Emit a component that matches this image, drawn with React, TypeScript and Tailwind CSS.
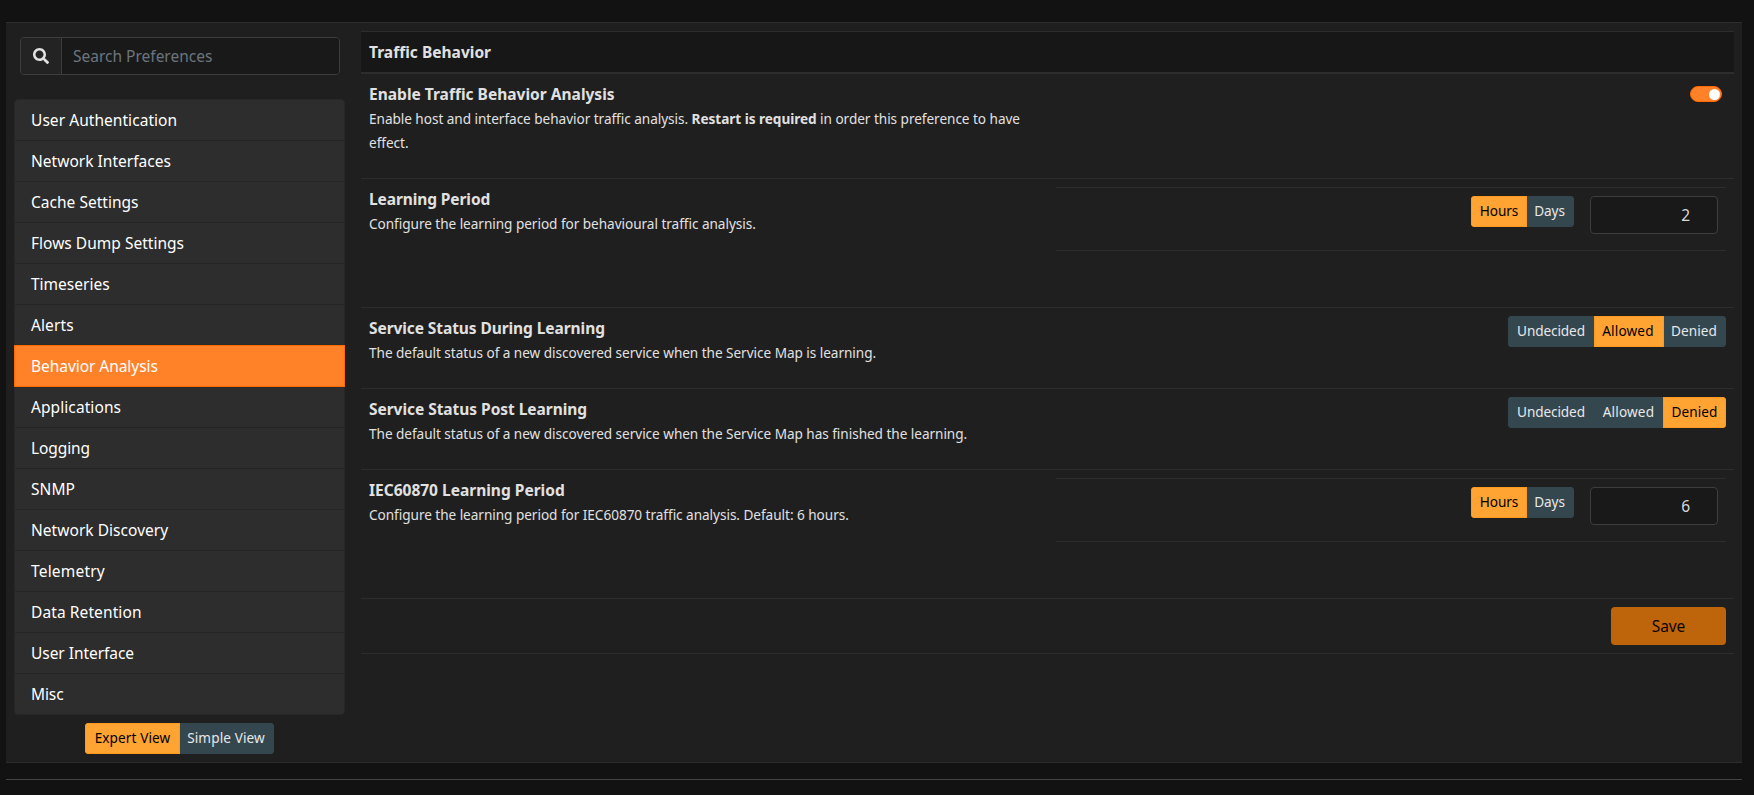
import type { ReactNode } from "react";
import { FaSearch } from "react-icons/fa";

type Choice = { label: string; width: string; spacing?: string };

const sections = [
  { label: "User Authentication", spacing: "tracking-[0.05px]" },
  { label: "Network Interfaces", spacing: "tracking-[0.02px]" },
  { label: "Cache Settings", spacing: "tracking-[0.02px]" },
  { label: "Flows Dump Settings", spacing: "tracking-[0.02px]" },
  { label: "Timeseries", spacing: "tracking-[0px]" },
  { label: "Alerts", spacing: "tracking-[0.1px]" },
  { label: "Behavior Analysis", spacing: "tracking-[-0.05px]" },
  { label: "Applications", spacing: "tracking-[0.08px]" },
  { label: "Logging", spacing: "tracking-[-0.1px]" },
  { label: "SNMP", spacing: "tracking-[0.05px]" },
  { label: "Network Discovery", spacing: "tracking-[0.04px]" },
  { label: "Telemetry", spacing: "tracking-[0.2px]" },
  { label: "Data Retention", spacing: "tracking-[0.1px]" },
  { label: "User Interface", spacing: "tracking-[-0.05px]" },
  { label: "Misc", spacing: "tracking-[-0.1px]" },
];

function ButtonGroup({ choices, active }: { choices: Choice[]; active: string }) {
  return (
    <div className="flex h-[31px] overflow-hidden rounded text-[13.6px]">
      {choices.map((c) => (
        <button
          key={c.label}
          className={`${c.width} whitespace-nowrap border pb-1 pt-px text-center leading-[21px] ${c.spacing ?? "tracking-[-0.1px]"} ${
            c.label === active
              ? "border-[#ff9a1f] bg-[#ffa333] text-black"
              : "border-[#34474f] bg-[#34474f] text-[#e8e8e8]"
          }`}
        >
          {c.label}
        </button>
      ))}
    </div>
  );
}

function Info({
  title,
  titleSpacing = "tracking-[-0.03px]",
  children,
}: {
  title: string;
  titleSpacing?: string;
  children: ReactNode;
}) {
  return (
    <div className="w-[695px] pl-2 pt-2">
      <div className={`text-[15.5px] font-bold leading-6 ${titleSpacing}`}>{title}</div>
      <p className="w-[675px] pt-px text-[13.6px] leading-6 tracking-[-0.04px]">{children}</p>
    </div>
  );
}

const periodChoices: Choice[] = [
  { label: "Hours", width: "w-[56px]" },
  { label: "Days", width: "w-[47px] pr-0.5" },
];

function PeriodControls({ value }: { value: number }) {
  return (
    <div className="mr-2 mt-2 flex h-16 flex-1 items-start justify-end border-y border-[#2d2d2d] pr-2 pt-2">
      <ButtonGroup choices={periodChoices} active="Hours" />
      <div className="ml-4 flex h-[38px] w-32 items-center justify-end rounded border border-[#3d3d3d] bg-[#191919] pr-[27px] pt-0.5 text-[15.5px] text-[#d8d8d8]">
        {value}
      </div>
    </div>
  );
}

export default function App() {
  return (
    <div className="h-[795px] w-[1754px] bg-[#121212] pl-1.5 pt-[22px] font-['Noto_Sans',sans-serif] text-[#e1e1e1]">
      <main className="flex h-[741px] w-[1736px] border-y border-[#2d2d2d] bg-[#1f1f1f]">
        <aside className="ml-2 w-[331px] shrink-0">
          <div className="mx-[6px] mt-[14px] flex h-[38px] w-80 overflow-hidden rounded border border-[#3d3d3d]">
            <div className="flex w-[41px] items-center justify-center border-r border-[#3d3d3d] bg-[#232323] pr-px">
              <FaSearch className="size-4" />
            </div>
            <div className="flex-1 bg-[#191919] pl-[11px] text-[15.5px] leading-[37px] text-[#6c757d]">
              Search Preferences
            </div>
          </div>
          <nav className="mt-6 rounded border border-[#272727] bg-[#2d2d2d] text-[15.5px] text-white">
            {sections.map((s, i) => (
              <div
                key={s.label}
                className={`${s.spacing} ${
                  s.label === "Behavior Analysis"
                    ? "relative -mx-px -mt-px h-[42px] border border-[#ff6a00] bg-[#ff8128] pl-4"
                    : i === sections.length - 1
                      ? "h-10 pl-4"
                      : i === 5
                        ? "h-[41px] pl-4"
                        : "h-[41px] border-b border-[#252525] pl-4"
                } pt-2 leading-6`}
              >
                {s.label}
              </div>
            ))}
          </nav>
          <div className="ml-[71px] mt-2 flex">
            <ButtonGroup
              active="Expert View"
              choices={[
                { label: "Expert View", width: "w-[95px]", spacing: "tracking-[0.1px]" },
                { label: "Simple View", width: "w-[94px] pr-0.5", spacing: "tracking-[0.1px]" },
              ]}
            />
          </div>
        </aside>

        <section className="ml-4 mt-2 w-[1373px]">
          <div className="h-[43px] border-b-2 border-t border-[#2d2d2d] bg-[#171717] pl-2 pt-2 text-[15.5px] font-bold leading-6 tracking-[0.02px]">
            Traffic Behavior
          </div>

          <div className="flex h-[105px] border-b border-[#2d2d2d]">
            <Info title="Enable Traffic Behavior Analysis" titleSpacing="tracking-[0.01px]">
              Enable host and interface behavior traffic analysis. <b>Restart is required</b> in order this preference to
              have effect.
            </Info>
            <div className="flex flex-1 justify-end pr-3 pt-3">
              <div className="flex h-4 w-8 items-center justify-end rounded-full border border-[#ff6a00] bg-[#ff8128] pr-px">
                <div className="size-[11px] rounded-full bg-white" />
              </div>
            </div>
          </div>

          <div className="flex h-[129px] border-b border-[#2d2d2d]">
            <Info title="Learning Period" titleSpacing="tracking-[-0.1px]">
              Configure the learning period for behavioural traffic analysis.
            </Info>
            <PeriodControls value={2} />
          </div>

          <div className="flex h-[81px] border-b border-[#2d2d2d]">
            <Info title="Service Status During Learning" titleSpacing="tracking-[-0.08px]">
              The default status of a new discovered service when the Service Map is learning.
            </Info>
            <div className="flex flex-1 justify-end pr-2 pt-2">
              <ButtonGroup
                active="Allowed"
                choices={[
                  { label: "Undecided", width: "w-[86px]" },
                  { label: "Allowed", width: "w-[70px] pr-0.5", spacing: "tracking-[0.15px]" },
                  { label: "Denied", width: "w-[62px] pr-0.5", spacing: "tracking-[0.05px]" },
                ]}
              />
            </div>
          </div>

          <div className="flex h-[81px] border-b border-[#2d2d2d]">
            <Info title="Service Status Post Learning" titleSpacing="tracking-[-0.04px]">
              The default status of a new discovered service when the Service Map has finished the learning.
            </Info>
            <div className="flex flex-1 justify-end pr-2 pt-2">
              <ButtonGroup
                active="Denied"
                choices={[
                  { label: "Undecided", width: "w-[86px]" },
                  { label: "Allowed", width: "w-[69px]", spacing: "tracking-[0.15px]" },
                  { label: "Denied", width: "w-[63px]", spacing: "tracking-[0.05px]" },
                ]}
              />
            </div>
          </div>

          <div className="flex h-[129px] border-b border-[#2d2d2d]">
            <Info title="IEC60870 Learning Period" titleSpacing="tracking-[0px]">
              Configure the learning period for IEC60870 traffic analysis. Default: 6 hours.
            </Info>
            <PeriodControls value={6} />
          </div>

          <div className="flex h-[55px] justify-end border-b border-[#2d2d2d] pr-2 pt-2">
            <button className="h-[38px] w-[115px] rounded bg-[#be640a] pt-0.5 text-[15.5px] tracking-[-0.1px] text-[#0c0600]">
              Save
            </button>
          </div>
        </section>
      </main>
      <hr className="mt-4 w-[1736px] border-[#444444]" />
    </div>
  );
}
